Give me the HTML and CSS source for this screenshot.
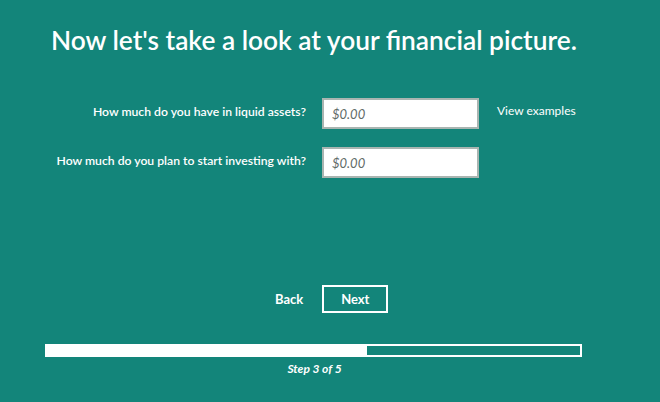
FILE: index.html
```html
<!DOCTYPE html>
<html>
<head lang="en">
    <meta charset="UTF-8">
    <title>Financial picture</title>
    <link rel="stylesheet" href="styles.css">
</head>
<body>
<div class="page">
    <h1 class="title">Now let's take a look at your financial picture.</h1>

    <div class="form">
        <label class="label" for="liquid">How much do you have in liquid assets?</label>
        <input class="field" id="liquid" type="text" placeholder="$0.00">
        <a class="examples" href="#">View examples</a>

        <label class="label" for="invest">How much do you plan to start investing with?</label>
        <input class="field" id="invest" type="text" placeholder="$0.00">
        <span></span>
    </div>

    <div class="actions">
        <a class="back" href="#">Back</a>
        <button class="next">Next</button>
    </div>

    <div class="progress">
        <div class="bar"><div class="fill" style="width: 60%;"></div></div>
        <p class="step">Step 3 of 5</p>
    </div>
</div>
</body>
</html>
```

FILE: styles.css
```css
body,div,h1,p,ul,li,form,input,button,label { margin:0; padding:0; }
body {
    background:#13857a;
    color:#fff;
    font-family: Lato, "Open Sans", Arial, sans-serif;
}
a { color:#fff; text-decoration:none; }

.page{
    width: 660px;
    height: 402px;
    display: flex;
    flex-direction: column;
}

.title{
    font-size: 26.3px;
    font-weight: 600;
    line-height: 32px;
    margin: 24px 0 0 51px;
}

.form{
    display: grid;
    grid-template-columns: 306px 157px auto;
    column-gap: 17px;
    row-gap: 18px;
    margin-top: 42px;
    align-items: start;
}

.label{
    text-align: right;
    font-size: 12.2px;
    font-weight: 600;
    padding-top: 6px;
}

.field{
    width: 157px;
    height: 31px;
    box-sizing: border-box;
    border: 2px solid #a9b5b1;
    background: #fff;
    padding: 0 8px;
    font: italic 13px Lato, Arial, sans-serif;
    color: #555;
    margin-left: -1px;
}
.field::placeholder{
    color: #5f6b68;
}

.examples{
    font-size: 12px;
    padding-top: 5px;
}

.actions{
    display: flex;
    align-items: center;
    margin-top: 107px;
    margin-left: 275px;
    gap: 19px;
}

.back{
    font-size: 13px;
    font-weight: 700;
}

.next{
    width: 66px;
    height: 28px;
    border: 2px solid #fff;
    background: transparent;
    color: #fff;
    font: 700 13px Lato, Arial, sans-serif;
}

.progress{
    margin: 31px 0 0 45px;
    width: 537px;
}

.bar{
    height: 13px;
    box-sizing: border-box;
    border: 2px solid #fff;
    background: #13857a;
}

.fill{
    height: 100%;
    background: #fff;
}

.step{
    text-align: center;
    font-size: 12px;
    font-weight: 700;
    font-style: italic;
    margin-top: 4px;
    margin-left: 2px;
}
```
